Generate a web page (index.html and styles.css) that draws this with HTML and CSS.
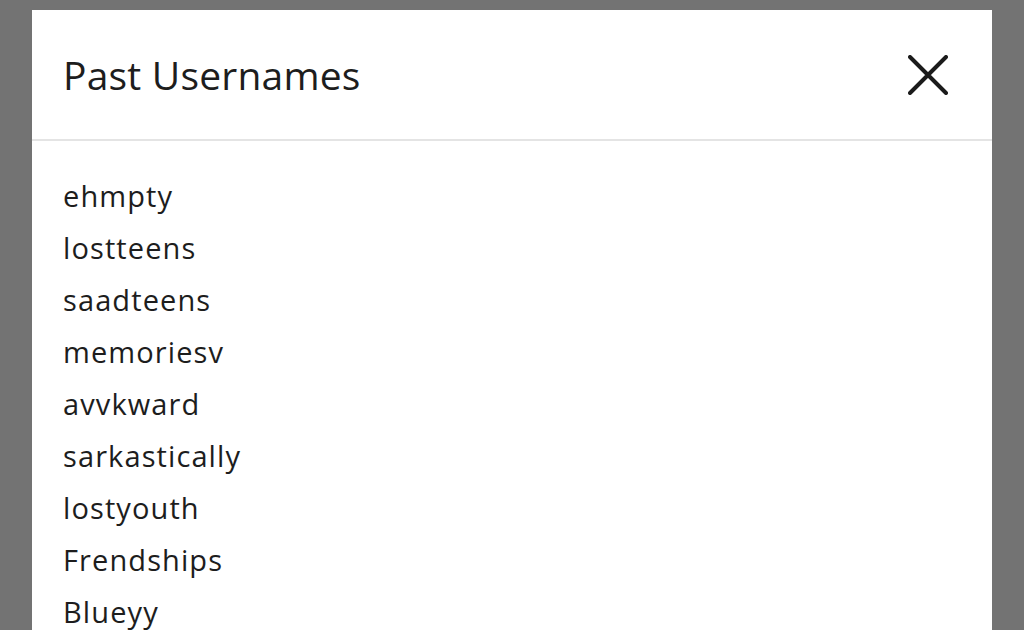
FILE: index.html
```html
<!DOCTYPE html>
<html>
<head>
<meta charset="utf-8">
<link rel="stylesheet" href="styles.css">
</head>
<body>
<div class="overlay">
  <div class="modal">
    <div class="modal-header">
      <h1 class="title">Past Usernames</h1>
      <button class="close" aria-label="Close">
        <svg width="40" height="40" viewBox="0 0 40 40"><path d="M2 2 L38 38 M38 2 L2 38" stroke="#1b1b1b" stroke-width="4" stroke-linecap="round" fill="none"/></svg>
      </button>
    </div>
    <ul class="names">
      <li>ehmpty</li>
      <li>lostteens</li>
      <li>saadteens</li>
      <li>memoriesv</li>
      <li>avvkward</li>
      <li>sarkastically</li>
      <li>lostyouth</li>
      <li>Frendships</li>
      <li>Blueyy</li>
    </ul>
  </div>
</div>
</body>
</html>
```
FILE: styles.css
```css
html, body {
  margin: 0;
  padding: 0;
  height: 100%;
  overflow: hidden;
}
body {
  background: #737373;
  font-family: "Open Sans", "Lato", sans-serif;
  color: #1d1d1d;
  font-variant-ligatures: none;
}
.overlay {
  padding: 10px 32px 0 32px;
}
.modal {
  background: #ffffff;
  height: 640px;
}
.modal-header {
  height: 129px;
  border-bottom: 2px solid #e4e4e4;
  display: flex;
  align-items: center;
  justify-content: space-between;
  padding: 0 44px 0 31px;
}
.title {
  margin: 0;
  font-weight: 400;
  font-size: 39px;
  letter-spacing: 0.2px;
  color: #1d1d1d;
}
.close {
  background: none;
  border: 0;
  padding: 0;
  width: 40px;
  height: 40px;
  display: flex;
}
.names {
  list-style: none;
  margin: 0;
  padding: 29px 31px 0 31px;
}
.names li {
  font-size: 29px;
  letter-spacing: 1.1px;
  line-height: 52px;
}
```
